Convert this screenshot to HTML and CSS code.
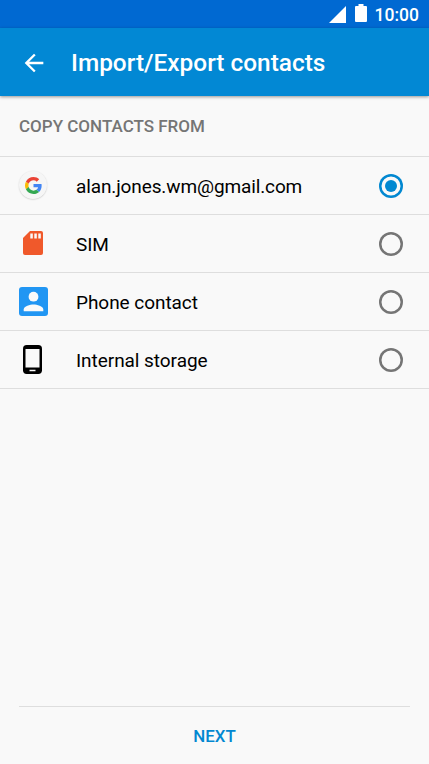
FILE: index.html
```html
<!DOCTYPE html>
<html lang="en">
<head>
  <meta charset="UTF-8">
  <title>Import/Export contacts</title>
  <meta name="viewport" content="width=device-width, initial-scale=1.0">
  <link rel="stylesheet" href="styles.css">
</head>
<body>
  <div class="status-bar">
    <svg class="signal" viewBox="0 0 17 17"><path d="M17 0v17H0z"/></svg>
    <svg class="battery" viewBox="0 0 12 18"><path d="M3.5 0h5v2H11a1 1 0 0 1 1 1v14a1 1 0 0 1-1 1H1a1 1 0 0 1-1-1V3a1 1 0 0 1 1-1h2.500z"/></svg>
    <span class="clock">10:00</span>
  </div>

  <header class="toolbar">
    <svg class="back" viewBox="0 0 24 24"><path d="M20 11H7.830l5.590-5.590L12 4l-8 8 8 8 1.410-1.410L7.830 13H20v-2z"/></svg>
    <h1>Import/Export contacts</h1>
  </header>

  <main class="content">
    <h2>COPY CONTACTS FROM</h2>

    <ul class="account-list">
      <li>
        <span class="icon">
          <span class="google-badge">
            <svg class="google" viewBox="0 0 48 48">
              <path fill="#ea4335" d="M24 9.500c3.540 0 6.710 1.220 9.210 3.600l6.850-6.850C35.900 2.380 30.470 0 24 0 14.620 0 6.510 5.380 2.560 13.220l7.980 6.190C12.430 13.720 17.740 9.500 24 9.500z"/>
              <path fill="#4285f4" d="M46.980 24.550c0-1.570-.15-3.090-.38-4.550H24v9.020h12.940c-.58 2.960-2.260 5.480-4.780 7.180l7.730 6c4.510-4.180 7.090-10.360 7.090-17.650z"/>
              <path fill="#fbbc05" d="M10.530 28.590c-.48-1.450-.76-2.990-.76-4.590s.27-3.140.76-4.590l-7.980-6.190C.92 16.460 0 20.120 0 24s.92 7.540 2.560 10.780l7.970-6.190z"/>
              <path fill="#34a853" d="M24 48c6.480 0 11.930-2.130 15.890-5.810l-7.730-6c-2.150 1.450-4.920 2.300-8.160 2.300-6.260 0-11.570-4.220-13.470-9.910l-7.980 6.190C6.510 42.620 14.620 48 24 48z"/>
            </svg>
          </span>
        </span>
        <span class="label email">alan.jones.wm@gmail.com</span>
        <span class="radio checked"></span>
      </li>
      <li>
        <span class="icon">
          <svg class="sim" viewBox="0 0 20 24">
            <path fill="#f0592b" d="M7 0h11a2 2 0 0 1 2 2v20a2 2 0 0 1-2 2H2a2 2 0 0 1-2-2V7z"/>
            <path fill="#fafafa" d="M7.300 2.500h2.500v5H7.300zM11.300 2.500h2.500v5h-2.500zM15.300 2.500h2.500v5h-2.500z"/>
          </svg>
        </span>
        <span class="label">SIM</span>
        <span class="radio"></span>
      </li>
      <li>
        <span class="icon">
          <svg class="contact" viewBox="0 0 29 29">
            <rect width="29" height="29" rx="3" fill="#2196f3"/>
            <circle cx="14.500" cy="9.700" r="4.900" fill="#fafafa"/>
            <path fill="#fafafa" d="M4.700 24.200v-1.600c0-3.300 6.500-5 9.800-5s9.800 1.700 9.800 5v1.600z"/>
          </svg>
        </span>
        <span class="label">Phone contact</span>
        <span class="radio"></span>
      </li>
      <li>
        <span class="icon">
          <svg class="phone" viewBox="0 0 19 29">
            <rect width="19" height="29" rx="3.700"/>
            <path fill="#fafafa" d="M2.500 4h14v18.500h-14zM6.500 24.700h6v1.600h-6z"/>
          </svg>
        </span>
        <span class="label">Internal storage</span>
        <span class="radio"></span>
      </li>
    </ul>
  </main>

  <footer class="footer">
    <button type="button" class="next-btn">NEXT</button>
  </footer>
</body>
</html>
```

FILE: styles.css
```css
* {
  box-sizing: border-box;
  margin: 0;
  padding: 0;
}

body {
  display: flex;
  flex-direction: column;
  height: 100vh;
  font-family: Roboto, sans-serif;
  background-color: #f9f9f9;
  color: #000;
}

svg {
  display: block;
}

.status-bar {
  display: flex;
  justify-content: flex-end;
  align-items: center;
  height: 28px;
  padding-right: 10px;
  background-color: #0069d2;
  color: #fff;
  fill: #fff;
}

.signal {
  width: 17px;
  height: 17px;
  margin-right: 9px;
}

.battery {
  width: 12px;
  height: 18px;
  margin: 0 8px 2px 0;
}

.clock {
  font-size: 17.500px;
  font-weight: 500;
  line-height: 28px;
  padding-top: 2px;
}

.toolbar {
  display: flex;
  align-items: center;
  height: 68px;
  padding: 2px 20px 0;
  background-color: #0288d4;
  color: #fff;
  fill: #fff;
  box-shadow: 0 1px 3px rgba(0, 0, 0, 0.4);
}

.back {
  width: 28px;
  height: 28px;
}

.toolbar h1 {
  margin-left: 23px;
  padding-bottom: 1px;
  font-size: 24.400px;
  font-weight: 500;
}

.content {
  flex: 1;
}

.content h2 {
  height: 61px;
  padding-left: 19px;
  border-bottom: 1px solid #dedede;
  font-size: 17px;
  font-weight: 500;
  line-height: 61px;
  color: #757575;
}

.account-list {
  list-style: none;
}

.account-list li {
  display: flex;
  align-items: center;
  height: 58px;
  padding: 0 26px 0 19px;
  border-bottom: 1px solid #dedede;
}

.icon {
  display: flex;
  align-items: center;
  width: 57px;
}

.google-badge {
  display: flex;
  align-items: center;
  justify-content: center;
  width: 28px;
  height: 28px;
  margin-bottom: 1px;
  border-radius: 50%;
  background-color: #f6f6f6;
  box-shadow: 0 0.500px 1.500px rgba(0, 0, 0, 0.2);
}

.google {
  width: 17px;
  height: 17px;
}

.sim {
  width: 20px;
  height: 24px;
  margin: 0 0 1px 4px;
}

.contact {
  width: 29px;
  height: 29px;
}

.phone {
  width: 19px;
  height: 29px;
  margin-left: 4px;
}

.label {
  flex: 1;
  padding-top: 1px;
  font-size: 19px;
  letter-spacing: -0.050px;
}

.label.email {
  letter-spacing: -0.120px;
}

.radio {
  display: flex;
  align-items: center;
  justify-content: center;
  width: 24px;
  height: 24px;
  border-radius: 50%;
  box-shadow: inset 0 0 0 2.500px #757575;
}

.radio.checked {
  box-shadow: inset 0 0 0 2.500px #0288d1;
}

.radio.checked::after {
  content: "";
  width: 12px;
  height: 12px;
  border-radius: 50%;
  background-color: #0288d1;
}

.footer {
  height: 58px;
  margin: 0 19px;
  border-top: 1px solid #dedede;
}

.next-btn {
  display: block;
  width: 100%;
  height: 57px;
  border: none;
  background: none;
  font-family: inherit;
  font-size: 16.900px;
  font-weight: 500;
  color: #0288d1;
}
```
